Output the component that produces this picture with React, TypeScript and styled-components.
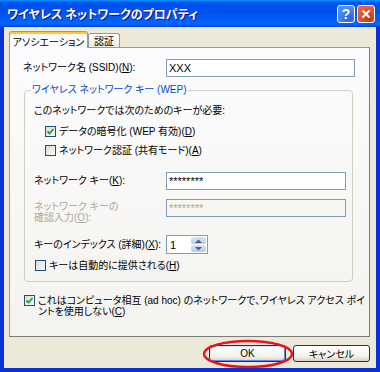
import React from "react";
import styled, { createGlobalStyle, css } from "styled-components";

const GlobalStyle = createGlobalStyle`
  html, body {
    margin: 0;
    padding: 0;
  }
  body {
    font-family: "Liberation Sans", "Noto Sans CJK JP", sans-serif;
    font-size: 10px;
    font-feature-settings: "palt";
    color: #000;
  }
`;

const Window = styled.div`
  position: relative;
  width: 380px;
  height: 372px;
  display: flex;
  flex-direction: column;
  background: #0831d9;
  overflow: hidden;
`;

const TitleBar = styled.div`
  height: 27px;
  flex: none;
  display: flex;
  align-items: center;
  padding: 0 5px 0 7px;
  background: linear-gradient(
    to bottom,
    #0997ff 0%,
    #0053ee 10%,
    #0050ee 45%,
    #0066ff 85%,
    #005bff 92%,
    #003dd7 100%
  );
`;

const Title = styled.div`
  flex: 1;
  color: #fff;
  font-family: "Noto Sans CJK JP", sans-serif;
  font-weight: bold;
  font-size: 12px;
  white-space: nowrap;
  text-shadow: 1px 1px #0f1089;
`;

const CaptionButton = styled.div<{ $kind: "help" | "close" }>`
  width: 18px;
  height: 18px;
  margin-left: 2px;
  box-sizing: border-box;
  border: 1px solid #fff;
  border-radius: 3px;
  display: flex;
  align-items: center;
  justify-content: center;
  color: #fff;
  font-weight: bold;
  font-size: 14px;
  ${(p) =>
    p.$kind === "help"
      ? css`
          background: radial-gradient(circle at 70% 80%, #2a62e6, #4c8ef8 70%);
        `
      : css`
          background: radial-gradient(circle at 70% 80%, #c5371a, #e8613a 70%);
        `}
`;

const Frame = styled.div`
  flex: 1;
  display: flex;
  padding: 0 4px 4px 4px;
`;

const Body = styled.div`
  flex: 1;
  display: flex;
  flex-direction: column;
  background: #ece9d8;
  padding: 4px 6px 0 5px;
`;

const TabStrip = styled.div`
  height: 16px;
  display: flex;
  align-items: flex-end;
  position: relative;
  z-index: 1;
`;

const Tab = styled.div<{ $active?: boolean }>`
  box-sizing: border-box;
  display: flex;
  align-items: center;
  justify-content: center;
  border: 1px solid #919b9c;
  border-bottom: none;
  border-radius: 3px 3px 0 0;
  white-space: nowrap;
  ${(p) =>
    p.$active
      ? css`
          width: 79px;
          height: 17px;
          margin-bottom: -1px;
          background: #fcfcfe;
          border-top: 1px solid #e68b2c;
          box-shadow: inset 0 2px 0 #ffc83c;
          padding-top: 2px;
        `
      : css`
          width: 32px;
          height: 14px;
          background: linear-gradient(#ffffff, #ecebe6);
        `}
`;

const Panel = styled.div`
  box-sizing: border-box;
  height: 290px;
  border: 1px solid #919b9c;
  border-right-color: #7a7a7a;
  border-bottom-color: #7a7a7a;
  background: linear-gradient(#fcfcfe, #f4f3ee);
  padding: 11px 0 0 13px;
  display: flex;
  flex-direction: column;
`;

const FieldRow = styled.div<{ $top?: number; $align?: string }>`
  display: flex;
  align-items: ${(p) => p.$align ?? "center"};
  margin-top: ${(p) => p.$top ?? 0}px;
`;

const Label = styled.div<{ $width: number; $disabled?: boolean; $pad?: number }>`
  width: ${(p) => p.$width}px;
  flex: none;
  white-space: nowrap;
  line-height: 12px;
  padding-top: ${(p) => p.$pad ?? 0}px;
  color: ${(p) => (p.$disabled ? "#aca899" : "#000")};
`;

const Line = styled.div`
  height: 11px;
  line-height: 11px;
  white-space: nowrap;
`;

const TextBox = styled.div<{ $width: number; $disabled?: boolean }>`
  box-sizing: border-box;
  width: ${(p) => p.$width}px;
  height: 18px;
  border: 1px solid #7f9db9;
  background: ${(p) => (p.$disabled ? "#f7f6f0" : "#fff")};
  color: ${(p) => (p.$disabled ? "#aca899" : "#000")};
  display: flex;
  align-items: center;
  padding-left: 2px;
  font-size: 11px;
  white-space: nowrap;
`;

const Group = styled.div`
  position: relative;
  box-sizing: border-box;
  width: 329px;
  margin: 13px 0 0 1px;
  border: 1px solid #d0d0bf;
  border-radius: 4px;
  padding: 0 0 10px 9px;
  display: flex;
  flex-direction: column;
`;

const Legend = styled.div`
  position: absolute;
  left: 6px;
  top: -7px;
  padding: 0 1px;
  background: #fcfcfe;
  color: #0046d5;
  line-height: 12px;
  white-space: nowrap;
`;

const Note = styled.div<{ $top: number }>`
  margin-top: ${(p) => p.$top}px;
  line-height: 12px;
  white-space: nowrap;
`;

const CheckRow = styled.div<{ $top: number; $indent?: number }>`
  display: flex;
  align-items: flex-start;
  gap: 3px;
  margin-top: ${(p) => p.$top}px;
  margin-left: ${(p) => p.$indent ?? 0}px;
  line-height: 11px;
  white-space: nowrap;
`;

const Box = styled.div`
  box-sizing: border-box;
  width: 11px;
  height: 11px;
  flex: none;
  border: 1px solid #1c5180;
  background: linear-gradient(135deg, #dcdcd7, #fbfbf9);
  display: flex;
  align-items: center;
  justify-content: center;
`;

const Spinner = styled.div`
  box-sizing: border-box;
  width: 42px;
  height: 19px;
  border: 1px solid #7f9db9;
  background: #fff;
  display: flex;
  align-items: stretch;
  font-size: 11px;
`;

const SpinValue = styled.div`
  flex: 1;
  display: flex;
  align-items: center;
  padding-left: 3px;
`;

const SpinButtons = styled.div`
  width: 15px;
  display: flex;
  flex-direction: column;
  gap: 1px;
  padding: 1px 1px 1px 0;
`;

const SpinButton = styled.div`
  flex: 1;
  border-radius: 2px;
  background: linear-gradient(#d7e3fb, #b6cbf5);
  display: flex;
  align-items: center;
  justify-content: center;
`;

const ButtonRow = styled.div`
  display: flex;
  justify-content: flex-end;
  gap: 7px;
  margin-top: 8px;
`;

const PushButton = styled.div<{ $default?: boolean }>`
  box-sizing: border-box;
  width: 77px;
  height: 17px;
  border: 1px solid #003c74;
  border-radius: 3px;
  background: linear-gradient(#ffffff, #f2f1ec 70%, #d6d0c5);
  display: flex;
  align-items: center;
  justify-content: center;
  white-space: nowrap;
  ${(p) =>
    p.$default &&
    css`
      box-shadow: inset 1px 1px 0 #cee7ff, inset -1px -1px 0 #6982ee;
    `}
`;

const Key = styled.span`
  text-decoration: underline;
`;

const Annotation = styled.svg`
  position: absolute;
  left: 202px;
  top: 339px;
`;

const Check = () => (
  <svg width="9" height="9" viewBox="0 0 9 9">
    <path d="M1.5 4.5 L3.5 6.5 L7.5 2" fill="none" stroke="#21a121" strokeWidth="1.8" />
  </svg>
);

const Arrow = ({ up }: { up?: boolean }) => (
  <svg width="7" height="4" viewBox="0 0 7 4">
    <path d={up ? "M0 4 L3.5 0.5 L7 4 Z" : "M0 0 L3.5 3.5 L7 0 Z"} fill="#4d6185" />
  </svg>
);

const CheckItem = ({
  checked,
  top,
  indent,
  children,
}: {
  checked?: boolean;
  top: number;
  indent?: number;
  children: React.ReactNode;
}) => (
  <CheckRow $top={top} $indent={indent}>
    <Box>{checked && <Check />}</Box>
    <div>{children}</div>
  </CheckRow>
);

export default function App() {
  return (
    <>
      <GlobalStyle />
      <Window>
        <TitleBar>
          <Title>ワイヤレス ネットワークのプロパティ</Title>
          <CaptionButton $kind="help">?</CaptionButton>
          <CaptionButton $kind="close">
            <svg width="10" height="10" viewBox="0 0 10 10">
              <path d="M1.5 1.5 L8.5 8.5 M8.5 1.5 L1.5 8.5" stroke="#fff" strokeWidth="2" />
            </svg>
          </CaptionButton>
        </TitleBar>
        <Frame>
          <Body>
            <TabStrip>
              <Tab $active>アソシエーション</Tab>
              <Tab>認証</Tab>
            </TabStrip>
            <Panel>
              <FieldRow>
                <Label $width={143}>
                  ネットワーク名 (SSID)(<Key>N</Key>):
                </Label>
                <TextBox $width={189}>XXX</TextBox>
              </FieldRow>
              <Group>
                <Legend>ワイヤレス ネットワーク キー (WEP)</Legend>
                <Note $top={14}>このネットワークでは次のためのキーが必要:</Note>
                <CheckItem checked top={9} indent={11}>
                  データの暗号化 (WEP 有効)(<Key>D</Key>)
                </CheckItem>
                <CheckItem top={8} indent={11}>
                  ネットワーク認証 (共有モード)(<Key>A</Key>)
                </CheckItem>
                <FieldRow $top={16}>
                  <Label $width={132}>
                    ネットワーク キー(<Key>K</Key>):
                  </Label>
                  <TextBox $width={180}>********</TextBox>
                </FieldRow>
                <FieldRow $top={9} $align="flex-start">
                  <Label $width={132} $disabled $pad={2}>
                    <Line>ネットワーク キーの</Line>
                    <Line>
                      確認入力(<Key>O</Key>):
                    </Line>
                  </Label>
                  <TextBox $width={180} $disabled>
                    ********
                  </TextBox>
                </FieldRow>
                <FieldRow $top={12}>
                  <Label $width={132}>
                    キーのインデックス (詳細)(<Key>X</Key>):
                  </Label>
                  <Spinner>
                    <SpinValue>1</SpinValue>
                    <SpinButtons>
                      <SpinButton>
                        <Arrow up />
                      </SpinButton>
                      <SpinButton>
                        <Arrow />
                      </SpinButton>
                    </SpinButtons>
                  </Spinner>
                </FieldRow>
                <CheckItem top={6} indent={1}>
                  キーは自動的に提供される(<Key>H</Key>)
                </CheckItem>
              </Group>
              <CheckItem checked top={13} indent={1}>
                <Line>これはコンピュータ相互 (ad hoc) のネットワークで、ワイヤレス アクセス ポイ</Line>
                <Line>
                  ントを使用しない(<Key>C</Key>)
                </Line>
              </CheckItem>
            </Panel>
            <ButtonRow>
              <PushButton $default>OK</PushButton>
              <PushButton>キャンセル</PushButton>
            </ButtonRow>
          </Body>
        </Frame>
        <Annotation width="92" height="30" viewBox="0 0 92 30">
          <ellipse cx="46" cy="15" rx="44" ry="13" fill="none" stroke="#e8141b" strokeWidth="2.5" />
        </Annotation>
      </Window>
    </>
  );
}
